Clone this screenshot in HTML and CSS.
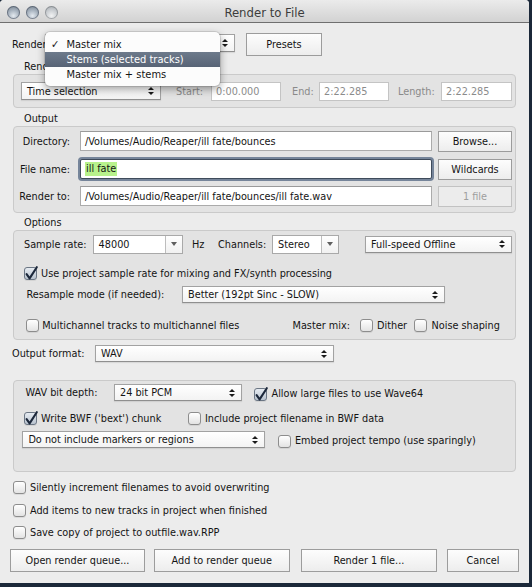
FILE: index.html
```
<!DOCTYPE html>
<html>
<head>
<meta charset="utf-8">
<title>Render to File</title>
<link rel="stylesheet" href="styles.css">
</head>
<body>
<div class="window">
  <div class="titlebar">
    <div class="lights"><span class="light"></span><span class="light"></span><span class="light light-off"></span></div>
    <div class="title">Render to File</div>
  </div>

  <div class="row row-render">
    <span class="lbl-render">Render</span>
    <div class="select sel-render"><span class="val"></span><span class="arr"></span></div>
    <div class="btn btn-presets">Presets</div>
    <div class="menu">
      <div class="mitem"><span class="mcheck">✓</span>Master mix</div>
      <div class="mitem mhi">Stems (selected tracks)</div>
      <div class="mitem">Master mix + stems</div>
    </div>
  </div>

  <div class="glabel glabel-rb"><span class="rb-clip">Render bounds</span></div>
  <div class="box box-bounds">
    <div class="select sel-time"><span class="val">Time selection</span><span class="arr"></span></div>
    <span class="dlabel dl-start">Start:</span>
    <div class="input dis in-start">0:00.000</div>
    <span class="dlabel dl-end">End:</span>
    <div class="input dis in-end">2:22.285</div>
    <span class="dlabel dl-len">Length:</span>
    <div class="input dis in-len">2:22.285</div>
  </div>

  <div class="glabel glabel-out">Output</div>
  <div class="box box-output">
    <div class="orow">
      <span class="flabel">Directory:</span>
      <div class="input in-path">/Volumes/Audio/Reaper/ill fate/bounces</div>
      <div class="btn btn-side">Browse...</div>
    </div>
    <div class="orow orow2">
      <span class="flabel">File name:</span>
      <div class="input in-path focus"><span class="sel-text">ill fate</span></div>
      <div class="btn btn-side">Wildcards</div>
    </div>
    <div class="orow orow3">
      <span class="flabel">Render to:</span>
      <div class="input in-path">/Volumes/Audio/Reaper/ill fate/bounces/ill fate.wav</div>
      <div class="btn btn-side btn-dis">1 file</div>
    </div>
  </div>

  <div class="glabel glabel-opt">Options</div>
  <div class="box box-options">
    <div class="prow prow1">
      <span class="lb-sr">Sample rate:</span>
      <div class="combo cb-sr"><span class="val">48000</span><span class="cbtn"><span class="down"></span></span></div>
      <span class="lb-hz">Hz</span>
      <span class="lb-ch">Channels:</span>
      <div class="combo cb-ch"><span class="val">Stereo</span><span class="cbtn"><span class="down"></span></span></div>
      <div class="select sel-speed"><span class="val">Full-speed Offline</span><span class="arr"></span></div>
    </div>
    <div class="prow prow2">
      <span class="cb on"><svg viewBox="0 0 14 14" width="14" height="14"><path d="M2.6 7.2 L5.6 11.4 L12.8 0.2" fill="none" stroke="#1c283b" stroke-width="2.1" stroke-linecap="round" stroke-linejoin="round"/></svg></span>
      <span class="ct">Use project sample rate for mixing and FX/synth processing</span>
    </div>
    <div class="prow prow3">
      <span class="lb-rs">Resample mode (if needed):</span>
      <div class="select sel-rs"><span class="val">Better (192pt Sinc - SLOW)</span><span class="arr"></span></div>
    </div>
    <div class="prow prow4">
      <span class="item-mc"><span class="cb"></span><span class="ct">Multichannel tracks to multichannel files</span></span>
      <span class="lb-mm">Master mix:</span>
      <span class="cb"></span><span class="ct ct-dither">Dither</span>
      <span class="cb"></span><span class="ct ct-ns">Noise shaping</span>
    </div>
  </div>

  <div class="frow">
    <span class="lb-of">Output format:</span>
    <div class="select sel-of"><span class="val">WAV</span><span class="arr"></span></div>
  </div>

  <div class="box box-wav">
    <div class="wrow wrow1">
      <span class="lb-bd">WAV bit depth:</span>
      <div class="select sel-bd"><span class="val">24 bit PCM</span><span class="arr"></span></div>
      <span class="cb on cb-w64"><svg viewBox="0 0 14 14" width="14" height="14"><path d="M2.6 7.2 L5.6 11.4 L12.8 0.2" fill="none" stroke="#1c283b" stroke-width="2.1" stroke-linecap="round" stroke-linejoin="round"/></svg></span>
      <span class="ct">Allow large files to use Wave64</span>
    </div>
    <div class="wrow wrow2">
      <span class="item-bwf"><span class="cb on"><svg viewBox="0 0 14 14" width="14" height="14"><path d="M2.6 7.2 L5.6 11.4 L12.8 0.2" fill="none" stroke="#1c283b" stroke-width="2.1" stroke-linecap="round" stroke-linejoin="round"/></svg></span><span class="ct">Write BWF ('bext') chunk</span></span>
      <span class="cb"></span><span class="ct ct-inc">Include project filename in BWF data</span>
    </div>
    <div class="wrow wrow3">
      <div class="select sel-mk"><span class="val">Do not include markers or regions</span><span class="arr"></span></div>
      <span class="cb cb-tempo"></span><span class="ct ct-tempo">Embed project tempo (use sparingly)</span>
    </div>
  </div>

  <div class="crow crow1"><span class="cb"></span><span class="ct">Silently increment filenames to avoid overwriting</span></div>
  <div class="crow crow2"><span class="cb"></span><span class="ct">Add items to new tracks in project when finished</span></div>
  <div class="crow crow3"><span class="cb"></span><span class="ct">Save copy of project to outfile.wav.RPP</span></div>

  <div class="brow">
    <div class="btn b-open">Open render queue...</div>
    <div class="btn b-add">Add to render queue</div>
    <div class="btn b-render">Render 1 file...</div>
    <div class="btn b-cancel">Cancel</div>
  </div>
</div>
</body>
</html>
```

FILE: styles.css
```
* { box-sizing: border-box; }
html, body { margin: 0; padding: 0; }
body {
  background: #1b2839;
  width: 532px;
  height: 587px;
  overflow: hidden;
  font-family: "DejaVu Sans Condensed", "DejaVu Sans", sans-serif;
  font-size: 10.8px;
  color: #141414;
}
.window {
  width: 529px;
  height: 583px;
  background: #ececec;
  display: flex;
  flex-direction: column;
  border-radius: 4px 4px 0 0;
}

/* title bar */
.titlebar {
  flex: none;
  height: 23px;
  display: grid;
  align-items: center;
  padding-top: 2px;
  background: linear-gradient(#ebebeb, #d2d2d2);
  border-bottom: 1px solid #6f6f6f;
  border-radius: 4px 4px 0 0;
}
.lights, .title { grid-area: 1 / 1; }
.lights {
  display: flex;
  gap: 6.4px;
  padding-left: 6.5px;
  justify-self: start;
}
.light {
  width: 13px;
  height: 13px;
  border-radius: 50%;
  background: radial-gradient(circle at 50% 75%, #e4eaf0 0%, #aab5c1 45%, #6f7b88 100%);
  box-shadow: inset 0 0 0 1px rgba(60,70,85,.55);
}
.light-off {
  background: radial-gradient(circle at 50% 75%, #f1f2f3 0%, #c9cdd1 50%, #9ea3a8 100%);
  box-shadow: inset 0 0 0 1px rgba(90,95,100,.45);
}
.title {
  text-align: center;
  font-size: 13px;
  color: #3c3c3c;
}

/* generic controls */
.select {
  display: flex;
  align-items: center;
  height: 18px;
  background: linear-gradient(#ffffff, #f3f3f3);
  border: 1px solid #a2a2a2;
  border-bottom-color: #8f8f8f;
  box-shadow: 0 1px 1px rgba(0,0,0,.08);
  padding-left: 5px;
  white-space: nowrap;
  overflow: hidden;
}
.select .val { flex: 1; }
.arr {
  display: flex;
  flex-direction: column;
  align-items: center;
  gap: 2px;
  margin-right: 6px;
  flex: none;
}
.arr::before, .arr::after {
  content: "";
  width: 0;
  height: 0;
  border-left: 3px solid transparent;
  border-right: 3px solid transparent;
}
.arr::before { border-bottom: 3.5px solid #1a1a1a; }
.arr::after { border-top: 3.5px solid #1a1a1a; }

.input {
  height: 20px;
  background: #fff;
  border: 1px solid #ababab;
  border-top-color: #9a9a9a;
  padding-left: 4px;
  display: flex;
  align-items: center;
  white-space: nowrap;
  overflow: hidden;
}
.input.dis { color: #8b8b8b; border-color: #c4c4c4; height: 19px; }

.btn {
  display: flex;
  align-items: center;
  justify-content: center;
  background: linear-gradient(#fdfdfd, #ededed);
  border: 1px solid #9c9c9c;
  white-space: nowrap;
}
.btn-dis { color: #9e9e9e; border-color: #c2c2c2; background: #ececec; }

.combo {
  display: flex;
  height: 19px;
  background: #fff;
  border: 1px solid #a9a9a9;
}
.combo .val { flex: 1; padding-left: 5px; display: flex; align-items: center; }
.cbtn {
  width: 17px;
  flex: none;
  border-left: 1px solid #bdbdbd;
  display: flex;
  align-items: center;
  justify-content: center;
  background: linear-gradient(#fefefe, #f1f1f1);
}
.down {
  width: 0; height: 0;
  border-left: 3px solid transparent;
  border-right: 3px solid transparent;
  border-top: 4px solid #5f5f5f;
}

.cb {
  flex: none;
  width: 13px;
  height: 13px;
  border: 1px solid #8d8d8d;
  border-radius: 3px;
  background: linear-gradient(#ffffff, #e3e3e3);
  box-shadow: 0 1px 0 rgba(0,0,0,.07);
  display: inline-flex;
  overflow: visible;
}
.cb svg { overflow: visible; flex: none; margin-left: -1px; margin-top: -1px; }
.cb.on {
  background: linear-gradient(#e6ebf1, #b9c3cf);
  border-color: #6b7684;
}
.ct { white-space: nowrap; margin-left: 3.7px; }

/* render row + menu */
.row-render {
  position: relative;
  margin-top: 10px;
  height: 23px;
  display: flex;
  align-items: center;
  padding-left: 12px;
}
.lbl-render { width: 33px; flex: none; }
.sel-render { width: 190px; margin-top: -3px; }
.btn-presets { width: 76px; height: 23px; margin-left: 11px; }
.menu {
  position: absolute;
  left: 45px;
  top: -1px;
  width: 175px;
  padding: 5px 0 4px;
  background: #fcfcfc;
  border-radius: 5px;
  box-shadow: 0 3px 9px rgba(0,0,0,.38), 0 0 0 1px rgba(0,0,0,.10);
  z-index: 5;
  font-size: 11px;
}
.mitem {
  height: 15px;
  line-height: 15px;
  padding-left: 21.5px;
  display: flex;
  white-space: nowrap;
}
.mcheck { width: 0; margin-left: -15.5px; margin-right: 15.5px; }
.mhi {
  background: linear-gradient(#6d7a8b, #586476);
  color: #fff;
}

/* group labels + boxes */
.glabel {
  flex: none;
  margin-top: 4px;
  height: 14px;
  line-height: 14px;
  padding-left: 24px;
}
.rb-clip {
  display: inline-block;
  width: 21px;
  overflow: hidden;
  white-space: nowrap;
  vertical-align: top;
}
.glabel-out { margin-top: 4px; }
.glabel-opt { margin-top: 3px; }
.box {
  flex: none;
  margin-left: 13px;
  width: 503px;
  border: 1px solid #cacaca;
  border-radius: 4px;
  background: #e3e3e3;
}

.box-bounds {
  height: 34px;
  display: flex;
  align-items: center;
  padding-left: 7px;
}
.sel-time { width: 140px; }
.dlabel { color: #8a8a8a; flex: none; }
.dl-start { margin-left: 15px; width: 35px; }
.in-start { width: 70px; }
.dl-end { margin-left: 11px; width: 27px; }
.in-end { width: 70px; }
.dl-len { margin-left: 9px; width: 43px; }
.in-len { width: 71px; }

.box-output { padding: 3px 0 5px; }
.orow { height: 22px; display: flex; align-items: center; }
.orow2 { margin-top: 6px; }
.orow3 { margin-top: 5px; }
.flabel { width: 66px; padding-right: 10px; text-align: right; flex: none; white-space: nowrap; }
.in-path { width: 352px; }
.input.focus {
  border: 1px solid #3f4b5b;
  border-radius: 2px;
  box-shadow: 0 0 0 2px #76859a;
  padding-left: 4px;
}
.sel-text { background: #b8f28c; padding: 0 1px; line-height: 14px; }
.btn-side { width: 74px; height: 21px; margin-left: 6px; }

.box-options { padding: 3px 0 7px; }
.prow { display: flex; align-items: center; }
.prow1 { height: 20px; padding-left: 10px; }
.lb-sr { width: 68.6px; flex: none; }
.cb-sr { width: 90px; }
.lb-hz { width: 26px; margin-left: 9.4px; flex: none; }
.lb-ch { width: 54px; flex: none; }
.cb-ch { width: 67px; }
.sel-speed { width: 147px; height: 17px; margin-left: 26px; }
.prow2 { height: 16px; margin-top: 11px; padding-left: 10.4px; }
.prow3 { height: 17px; margin-top: 5px; padding-left: 12.5px; }
.lb-rs { width: 155.5px; flex: none; }
.sel-rs { width: 262.5px; height: 17px; }
.prow4 { height: 14px; margin-top: 15px; padding-left: 11.5px; }
.item-mc { width: 267px; flex: none; display: flex; align-items: center; }
.lb-mm { width: 67px; flex: none; }
.ct-dither { width: 36.5px; margin-left: 4.5px; }
.ct-ns { margin-left: 5px; }

.frow {
  flex: none;
  margin-top: 5px;
  height: 17px;
  display: flex;
  align-items: center;
  padding-left: 12px;
}
.lb-of { width: 83px; flex: none; }
.sel-of { width: 239px; height: 17px; }

.box-wav { margin-top: 18px; padding: 3px 0 23px; }
.wrow { display: flex; align-items: center; }
.wrow1 { height: 17px; padding-left: 11.5px; }
.lb-bd { width: 88.5px; flex: none; }
.sel-bd { width: 128px; height: 17px; }
.cb-w64 { margin-left: 12px; margin-top: 4px; }
.wrow1 .ct { margin-left: 4.5px; margin-top: 2px; }
.wrow2 { height: 15px; margin-top: 10px; padding-left: 10.4px; }
.item-bwf { width: 163.2px; flex: none; display: flex; align-items: center; }
.ct-inc { margin-left: 4.4px; }
.wrow3 { height: 17px; margin-top: 5px; padding-left: 8.4px; }
.sel-mk { width: 242.3px; height: 17px; }
.cb-tempo { margin-left: 13px; margin-top: 4px; }
.ct-tempo { margin-left: 4.3px; margin-top: 1px; }

.crow {
  flex: none;
  height: 15px;
  display: flex;
  align-items: center;
  padding-left: 12.5px;
}
.crow .ct { margin-left: 4.5px; }
.crow1 { margin-top: 8px; }
.crow2 { margin-top: 8px; }
.crow3 { margin-top: 7px; }

.brow {
  flex: none;
  margin-top: 9px;
  height: 23px;
  display: flex;
  padding-left: 10px;
}
.brow .btn { height: 23px; }
.b-open { width: 135px; }
.b-add { width: 135.5px; margin-left: 9px; }
.b-render { width: 135.7px; margin-left: 11.5px; }
.b-cancel { width: 72px; margin-left: 10.3px; }
```
